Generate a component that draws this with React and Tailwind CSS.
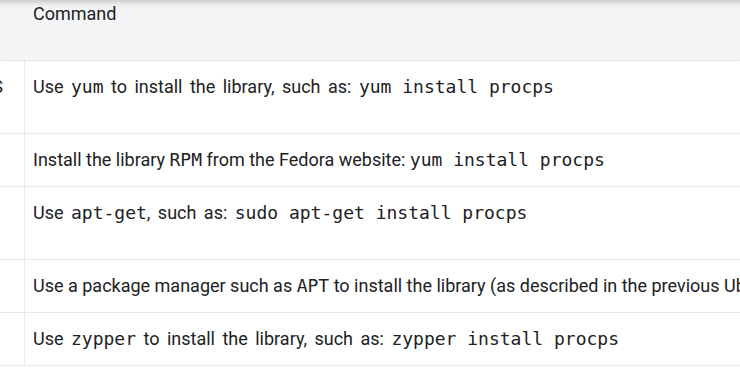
import React from 'react';

const rows = [
  {
    side: ['Red Hat / CentOS', 'Enterprise Linux'],
    wide: true,
    cmd: (
      <>
        Use <Code>yum</Code> to install the library, such as: <Code>yum install procps</Code>
      </>
    ),
  },
  {
    side: ['Fedora'],
    cmd: (
      <>
        Install the library <Code>RPM</Code> from the Fedora website: <Code>yum install procps</Code>
      </>
    ),
  },
  {
    side: ['Debian /', 'Ubuntu'],
    wide: true,
    cmd: (
      <>
        Use <Code>apt-get</Code>, such as: <Code>sudo apt-get install procps</Code>
      </>
    ),
  },
  {
    side: ['Mint'],
    cmd: (
      <>
        Use a package manager such as <Code>APT</Code> to install the library (as described in the previous Ubuntu section)
      </>
    ),
  },
  {
    side: ['SUSE'],
    wide: true,
    cmd: (
      <>
        Use <Code>zypper</Code> to install the library, such as: <Code>zypper install procps</Code>
      </>
    ),
  },
];

function Code({ children }) {
  return (
    <code className="font-['DejaVu_Sans_Mono',monospace] text-[18px] [word-spacing:0px]">
      {children}
    </code>
  );
}

export default function App() {
  return (
    <div className="w-[740px] h-[370px] overflow-hidden bg-white font-['Roboto',sans-serif] text-[18px] leading-[20px] text-[#202124]">
      {/* Header */}
      <div className="grid grid-cols-[25px_1fr] h-[61px] border-b border-[#e3e4e8] bg-[#f4f5f7] shadow-[inset_0_7px_6px_-5px_rgba(0,0,0,0.22)]">
        <div />
        <div className="pl-2 pt-[4px]">Command</div>
      </div>

      {/* Rows */}
      {rows.map((row, i) => (
        <div key={i} className="grid grid-cols-[25px_1fr] border-b border-[#e8e9ec]">
          <div className="border-r border-[#e8e9ec] py-4 overflow-hidden flex flex-col items-end">
            {row.side.map((line, j) => (
              <div
                key={j}
                className={
                  i === 0 && j === 0
                    ? 'whitespace-nowrap pr-[21px]'
                    : 'whitespace-nowrap pr-[40px]'
                }
              >
                {line}
              </div>
            ))}
          </div>
          <div
            className={
              row.wide
                ? 'pl-2 py-4 whitespace-nowrap overflow-hidden [word-spacing:3px]'
                : 'pl-2 py-4 whitespace-nowrap overflow-hidden'
            }
          >
            {row.cmd}
          </div>
        </div>
      ))}
    </div>
  );
}
